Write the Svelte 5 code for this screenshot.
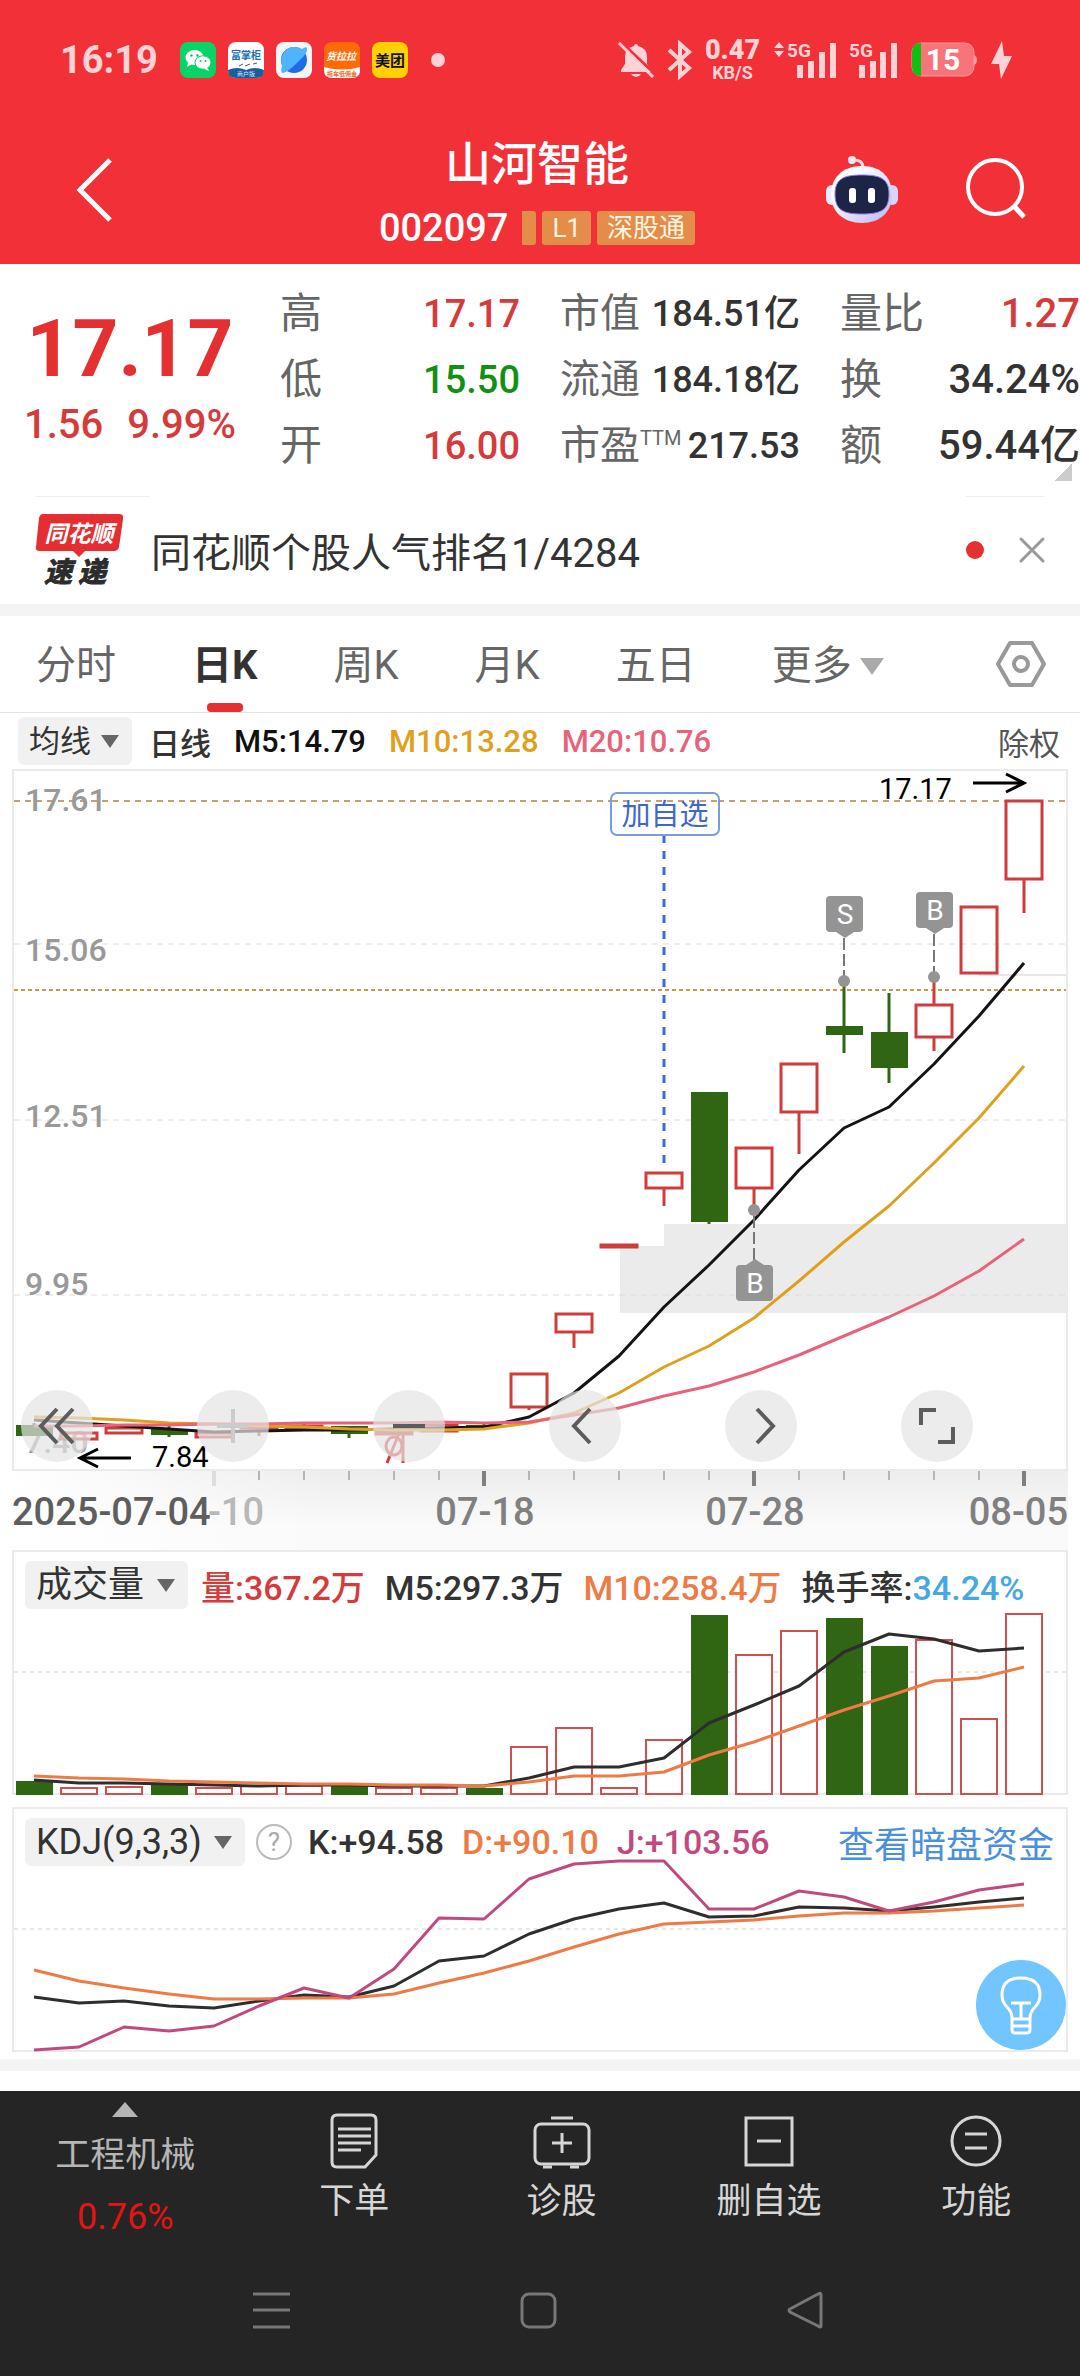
<script>
  let tab = '日K';
  const tabs = ['分时', '日K', '周K', '月K', '五日'];

  const quotes = [
    [
      { label: '高', value: '17.17', tone: 'up' },
      { label: '低', value: '15.50', tone: 'down' },
      { label: '开', value: '16.00', tone: 'up' }
    ],
    [
      { label: '市值', value: '184.51亿' },
      { label: '流通', value: '184.18亿' },
      { label: '市盈', sup: 'TTM', value: '217.53' }
    ],
    [
      { label: '量比', value: '1.27', tone: 'up' },
      { label: '换', value: '34.24%' },
      { label: '额', value: '59.44亿' }
    ]
  ];

  // [up, body top, body bottom, wick top, wick bottom]
  const candles = [
    [0, 655, 666, 653, 666],
    [1, 663, 669, 663, 669],
    [1, 658, 663, 658, 663],
    [0, 659, 665, 656, 667],
    [1, 663, 667, 663, 667],
    [1, 655, 658, 655, 666],
    [1, 656, 658, 654, 658],
    [0, 656, 664, 656, 668],
    [1, 662, 664, 662, 664],
    [1, 655, 661, 655, 661],
    [0, 655, 658, 654, 658],
    [1, 604, 637, 604, 640],
    [1, 544, 562, 544, 578],
    [1, 475, 477, 475, 477],
    [1, 403, 418, 403, 436],
    [0, 322, 452, 322, 454],
    [1, 378, 418, 378, 440],
    [1, 294, 342, 294, 384],
    [0, 256, 265, 211, 283],
    [0, 262, 298, 223, 313],
    [1, 235, 267, 207, 281],
    [1, 137, 203, 137, 203],
    [1, 31, 109, 31, 143]
  ];
  const ma5 = [650, 653, 656, 659, 662, 661, 660, 660, 659, 658, 657, 647, 623, 586, 537, 495, 450, 400, 358, 337, 294, 246, 193];
  const ma10 = [647, 648, 650, 653, 654, 656, 657, 659, 660, 660, 659, 653, 643, 623, 597, 576, 548, 511, 472, 436, 393, 348, 296];
  const ma20 = [656, 656, 655, 655, 654, 654, 653, 653, 653, 652, 653, 652, 645, 638, 626, 616, 602, 585, 566, 547, 526, 501, 469];

  const volTops = [231, 238, 237, 235, 238, 236, 236, 235, 238, 238, 238, 197, 178, 238, 190, 65, 105, 81, 68, 96, 90, 169, 64];
  const vol5 = [230, 233, 233, 234, 235, 236, 235, 235, 236, 236, 236, 228, 217, 217, 208, 173, 155, 136, 102, 84, 89, 101, 98];
  const vol10 = [226, 228, 229, 231, 232, 233, 234, 234, 235, 235, 236, 232, 226, 226, 222, 205, 192, 176, 160, 146, 131, 128, 117];

  const kLine = [190, 196, 194, 199, 201, 194, 188, 190, 179, 154, 149, 127, 112, 102, 96, 110, 109, 100, 101, 104, 100, 95, 91];
  const dLine = [163, 174, 181, 187, 192, 192, 191, 191, 187, 176, 166, 154, 140, 127, 117, 115, 113, 109, 106, 106, 104, 101, 98];
  const jLine = [243, 240, 220, 224, 219, 199, 181, 191, 162, 111, 112, 72, 57, 54, 54, 102, 102, 84, 90, 104, 95, 83, 77];

  const priceLabels = [
    ['17.61', 41],
    ['15.06', 191],
    ['12.51', 357],
    ['9.95', 525],
    ['7.40', 683]
  ];
  const ticks = [5, 6, 7, 8, 9, 11, 12, 13, 14, 15, 17, 18, 19, 20, 21];

  const x = (i) => 34 + i * 45;
  const line = (ys) => ys.map((y, i) => `${x(i)},${y}`).join(' ');
</script>

<div class="page">
  <header class="top">
    <div class="status">
      <span class="time">16:19</span>
      <div class="apps">
        <svg width="36" height="36" viewBox="0 0 36 36">
          <rect width="36" height="36" rx="8" fill="#07d466" />
          <ellipse cx="14.500" cy="15.500" rx="9" ry="7.500" fill="#fff" />
          <path d="M8 20l-1 5 5-3z" fill="#fff" />
          <ellipse cx="23" cy="20.500" rx="8" ry="6.700" fill="#fff" stroke="#07d466" />
          <path d="M27 25l2 4-5-2z" fill="#fff" />
          <g fill="#07c05c"><circle cx="11.500" cy="13.500" r="1.200" /><circle cx="17.500" cy="13.500" r="1.200" /><circle cx="20.500" cy="19" r="1" /><circle cx="25.500" cy="19" r="1" /></g>
        </svg>
        <svg width="36" height="36" viewBox="0 0 36 36">
          <rect width="36" height="36" rx="8" fill="#fff" />
          <path d="M0 28q9-4 18 0q9-4 18 0q0 8-8 8H8q-8 0-8-8z" fill="#1a5e9c" />
          <text x="18" y="17" text-anchor="middle" font-size="10" font-weight="700" fill="#1b70b0">富掌柜</text>
          <path d="M11 24l4-2m2 2l5-2m3 0l4-1" stroke="#555" fill="none" />
          <text x="18" y="34" text-anchor="middle" font-size="6" fill="#d9ecff">商户版</text>
        </svg>
        <svg width="36" height="36" viewBox="0 0 36 36">
          <rect width="36" height="36" rx="8" fill="#f5f5f7" />
          <circle cx="18" cy="18" r="13" fill="#1e6ce8" />
          <path d="M6 24C3 13 10 5 18 5q5 0 8 2 4-3 5-1 1 5-8 13Q12 30 7 31q-3 0-1-7z" fill="#4fb4fb" />
        </svg>
        <svg width="36" height="36" viewBox="0 0 36 36">
          <rect width="36" height="36" rx="8" fill="#ff6a08" />
          <path d="M0 25q18 5 36 0v3q0 8-8 8H8q-8 0-8-8z" fill="#fff" />
          <text x="17" y="18" text-anchor="middle" font-size="10" font-weight="700" font-style="italic" fill="#fff">货拉拉</text>
          <text x="18" y="34" text-anchor="middle" font-size="6" font-weight="700" fill="#f26a1b">拖车低佣金</text>
        </svg>
        <svg width="36" height="36" viewBox="0 0 36 36">
          <rect width="36" height="36" rx="8" fill="#ffd100" />
          <text x="18" y="24" text-anchor="middle" font-size="15" font-weight="700" fill="#111">美团</text>
        </svg>
      </div>
      <span class="more-dot"></span>

      <div class="sys">
        <svg width="36" height="36" viewBox="0 0 36 36" fill="currentColor">
          <path d="M18 2q2 0 2 2 9 2 9 11v7l4 6v2H3v-2l4-6v-7Q7 6 16 4q0-2 2-2zM13 32h10q-2 3-5 3t-5-3z" />
          <path d="M4 1L37 32" stroke="#f23037" stroke-width="3" />
          <path d="M1 1L35 35" stroke="currentColor" stroke-width="3" />
        </svg>
        <svg width="23" height="36" viewBox="0 0 23 36" fill="none" stroke="currentColor" stroke-width="4">
          <path d="M1 8l20 18-9 8V2l9 8L1 28" />
        </svg>
        <div class="net"><b>0.47</b><span>KB/S</span></div>
        <svg width="61" height="36" viewBox="0 0 61 36" fill="currentColor">
          <path d="M0 6l5-6 5 6zM0 9h10l-5 6z" />
          <text x="13" y="15" font-size="19" font-weight="700">5G</text>
          <path d="M23 23h6v13h-6zM34 19h6v17h-6zM45 10h6v26h-6zM56 1h6v35h-6z" />
        </svg>
        <svg width="48" height="36" viewBox="0 0 48 36" fill="currentColor">
          <text x="0" y="15" font-size="19" font-weight="700">5G</text>
          <path d="M10 23h6v13h-6zM21 19h6v17h-6zM31 10h6v26h-6zM42 1h6v35h-6z" />
        </svg>
        <svg width="66" height="36" viewBox="0 0 66 36">
          <path d="M63 13q3 1 3 5t-3 5z" fill="#f9a0a3" />
          <rect x="1" y="1" width="62" height="33" rx="9" fill="#f7757a" stroke="#f9999d" />
          <path d="M10 1Q1 1 1 10v15q0 9 9 9z" fill="#0fbf13" />
          <text x="32" y="28" text-anchor="middle" font-size="30" font-weight="700" fill="#fff">15</text>
        </svg>
        <svg width="21" height="38" viewBox="0 0 21 38" fill="currentColor"><path d="M11 0L0 23h8l2 15L21 15h-8z" /></svg>
      </div>
    </div>

    <div class="titlebar">
      <button class="plain" aria-label="返回">
        <svg width="38" height="66" viewBox="0 0 38 66" fill="none" stroke="#fff" stroke-width="5"><path d="M34 3L4 33l30 30" /></svg>
      </button>
      <div class="title">
        <h1>山河智能</h1>
        <div class="sub">
          <span class="code">002097</span>
          <span class="badge cut"></span>
          <span class="badge">L1</span>
          <span class="badge">深股通</span>
        </div>
      </div>
      <div class="actions">
        <button class="plain" aria-label="智能助手">
          <svg width="72" height="68" viewBox="0 0 72 68">
            <defs>
              <linearGradient id="shell" x1="0" y1="0" x2="1" y2="1">
                <stop offset="0.3" stop-color="#fdfcff" /><stop offset="1" stop-color="#b9b6ee" />
              </linearGradient>
            </defs>
            <path d="M26 5q11-1 11 8" fill="none" stroke="#f7d9e6" stroke-width="3" />
            <circle cx="26" cy="5" r="4" fill="#f9e6ef" />
            <rect x="0" y="30" width="12" height="20" rx="6" fill="#eeeaff" />
            <rect x="60" y="30" width="12" height="20" rx="6" fill="#d8d4fa" />
            <path d="M36 11c20 0 30 12 30 29S54 68 36 68 5 57 5 40s11-29 31-29z" fill="url(#shell)" />
            <path d="M36 20c17 0 27 3 27 19s-8 20-27 20S9 55 9 39s10-19 27-19z" fill="#1d2546" stroke="#8d7be8" />
            <rect x="23" y="33" width="7" height="15" rx="3" fill="#fff" />
            <rect x="42" y="33" width="7" height="15" rx="3" fill="#fff" />
          </svg>
        </button>
        <button class="plain" aria-label="搜索">
          <svg width="62" height="62" viewBox="0 0 62 62" fill="none" stroke="#fff" stroke-width="4">
            <circle cx="29" cy="29" r="27" /><path d="M47 47l11 12" stroke-width="5" />
          </svg>
        </button>
      </div>
    </div>
  </header>

  <section class="quote">
    <div class="price">
      <strong>17.17</strong>
      <div><span>1.56</span><span>9.99%</span></div>
    </div>
    {#each quotes as col, c}
      <dl class:first={c === 0} class:mid={c === 1}>
        {#each col as q}
          <div class="q">
            <dt>{q.label}{#if q.sup}<sup>{q.sup}</sup>{/if}</dt>
            <dd class={q.tone}>{q.value}</dd>
          </div>
        {/each}
      </dl>
    {/each}
    <span class="corner"></span>
  </section>

  <section class="news">
    <svg width="90" height="72" viewBox="0 0 90 72">
      <path d="M8 0h76q5 0 4 5l-4 28q-1 4-5 4H50l-6 6-6-6H5q-5 0-4-4L4 4q1-4 4-4z" fill="#e42e31" />
      <text x="44" y="28" text-anchor="middle" font-size="23" font-weight="700" font-style="italic" fill="#fff">同花顺</text>
      <g font-size="28" font-weight="700" font-style="italic" fill="#2c2c2c" stroke="#2c2c2c">
        <text x="9" y="68">速</text><text x="43" y="68">递</text>
      </g>
    </svg>
    <a href="#rank">同花顺个股人气排名1/4284</a>
    <span class="red-dot"></span>
    <button class="plain" aria-label="关闭">
      <svg width="26" height="26" viewBox="0 0 26 26" stroke="#999" stroke-width="3" stroke-linecap="round"><path d="M2 2l22 22M24 2L2 24" /></svg>
    </button>
  </section>

  <nav class="tabs">
    {#each tabs as t}
      <button class:active={tab === t} on:click={() => (tab = t)}>{t}</button>
    {/each}
    <button class="more">更多<svg width="24" height="18" viewBox="0 0 24 18"><path d="M0 1h24L12 18z" fill="#aaa" /></svg></button>
    <button class="settings" aria-label="设置">
      <svg width="50" height="48" viewBox="0 0 50 48" fill="none" stroke="#999" stroke-width="4" stroke-linejoin="round">
        <path d="M14 3h22l12 21-12 21H14L2 24z" /><circle cx="25" cy="24" r="7" />
      </svg>
    </button>
  </nav>

  <div class="ma">
    <div class="chip">
      <select aria-label="均线"><option>均线</option></select>
      <svg width="18" height="13" viewBox="0 0 18 13"><path d="M0 0h18L9 13z" fill="#666" /></svg>
    </div>
    <span>日线</span>
    <span class="black">M5:14.79</span>
    <span class="gold">M10:13.28</span>
    <span class="pink">M20:10.76</span>
    <button class="plain adjust">除权</button>
  </div>

  <section class="panel kchart">
    <svg class="plot" viewBox="14 1 1052 698">
      <g fill="#ebebeb">
        <rect x="620" y="476" width="44" height="67" />
        <rect x="664" y="454" width="402" height="89" />
      </g>
      <path d="M979 205h87" stroke="#ece3ea" stroke-width="2" />
      <g stroke="#dcdcdc" stroke-width="1" stroke-dasharray="6 5">
        <path d="M14 174h1052M14 350h1052M14 525h1052" />
      </g>
      <path d="M14 31h1052" stroke="#c2a070" stroke-width="2" stroke-dasharray="6 5" />
      <path d="M14 220h1052" stroke="#c99a4c" stroke-width="2" stroke-dasharray="4 3" />
      {#each priceLabels as [label, y]}
        <text x="25" {y} class="axis">{label}</text>
      {/each}

      {#each candles as [up, top, bottom, high, low], i}
        {#if up}
          <rect x={x(i) - 18} y={top} width="36" height={bottom - top} class="rise" />
          <path d="M{x(i)} {high}V{top}M{x(i)} {bottom}V{low}" class="rise" />
        {:else}
          <rect x={x(i) - 18} y={top} width="37" height={bottom - top} class="fall" />
          <path d="M{x(i)} {high}V{low}" class="fall-wick" />
        {/if}
      {/each}
      <g fill="none" stroke="#d03a3a" stroke-width="3">
        <ellipse cx="394" cy="676" rx="8" ry="9" /><path d="M403 660v33M402 656l-15 37" />
      </g>

      <g fill="none" stroke-width="3" stroke-linejoin="round">
        <polyline points={line(ma5)} stroke="#141414" />
        <polyline points={line(ma10)} stroke="#dfa020" />
        <polyline points={line(ma20)} stroke="#e8637a" />
      </g>

      <!-- watchlist date -->
      <path d="M664 65v329" stroke="#4169cf" stroke-width="3" stroke-dasharray="8 8" />
      <rect x="611" y="23" width="108" height="42" rx="6" fill="#fff" stroke="#7a9be0" stroke-width="2" />
      <path d="M612 31h106" stroke="#c2a070" stroke-width="2" stroke-dasharray="6 5" />
      <text x="665" y="55" text-anchor="middle" font-size="29" fill="#3f68cc">加自选</text>

      <!-- trade marks -->
      <g class="mark">
        <path d="M844 168v40M934 164v40M754 446v44" />
        <circle cx="844" cy="211" r="6" /><circle cx="934" cy="207" r="6" /><circle cx="754" cy="440" r="6" />
        <rect x="826" y="126" width="37" height="36" rx="4" /><path class="tip" d="M836 162h18l-9 6z" />
        <rect x="916" y="122" width="37" height="36" rx="4" /><path class="tip" d="M926 158h18l-9 6z" />
        <rect x="736" y="495" width="37" height="36" rx="4" /><path class="tip" d="M746 495h18l-9-6z" />
        <text x="845" y="154">S</text><text x="935" y="150">B</text><text x="755" y="523">B</text>
      </g>

      <g font-size="29">
        <text x="879" y="29">17.17</text><text x="152" y="697">7.84</text>
      </g>
      <path d="M973 13h50M1006 4l18 9-18 9M131 688H81M98 679l-18 9 18 9" fill="none" stroke="#000" stroke-width="3" />
    </svg>

    <div class="tools">
      <button aria-label="最早"><svg width="36" height="36" viewBox="0 0 36 36"><path d="M18 1L2 18l16 17M34 1L18 18l16 17" /></svg></button>
      <button class="off" aria-label="放大"><svg width="36" height="36" viewBox="0 0 36 36"><path d="M18 1v34M2 18h32" /></svg></button>
      <button aria-label="缩小"><svg width="36" height="36" viewBox="0 0 36 36"><path d="M2 18h32" /></svg></button>
      <button aria-label="左移"><svg width="36" height="36" viewBox="0 0 36 36"><path d="M23 1L7 18l16 17" /></svg></button>
      <button aria-label="右移"><svg width="36" height="36" viewBox="0 0 36 36"><path d="M14 1l16 17-16 17" /></svg></button>
      <button aria-label="全屏"><svg width="36" height="36" viewBox="0 0 36 36"><path d="M2 17V2h15M34 19v15H19" /></svg></button>
    </div>
  </section>

  <div class="dates">
    <svg class="plot" viewBox="12 0 1056 79">
      {#each ticks as i}
        <path d="M{x(i)} 0v9" stroke="#b5b5b5" stroke-width="2" />
      {/each}
      <path d="M{x(4)} 0v15" stroke="#ddd" stroke-width="4" />
      <path d="M{x(10)} 0v15M{x(16)} 0v15M{x(22)} 0v15" stroke="#808080" stroke-width="4" />
      <g class="date">
        <text x="12" y="54" fill="#5e5e5e">2025-07-04</text>
        <text x="264" y="54" text-anchor="end" fill="#b8b8b8">-10</text>
        <text x="485" y="54" text-anchor="middle" fill="#808080">07-18</text>
        <text x="755" y="54" text-anchor="middle" fill="#808080">07-28</text>
        <text x="1068" y="54" text-anchor="end" fill="#808080">08-05</text>
      </g>
    </svg>
  </div>

  <section class="panel">
    <div class="legend">
      <div class="chip">
        <select aria-label="指标一"><option>成交量</option></select>
        <svg width="18" height="13" viewBox="0 0 18 13"><path d="M0 0h18L9 13z" fill="#666" /></svg>
      </div>
      <span class="red">量:367.2万</span>
      <span>M5:297.3万</span>
      <span class="orange">M10:258.4万</span>
      <span>换手率:<span class="blue">34.24%</span></span>
    </div>
    <svg class="plot" viewBox="14 59 1052 184">
      <path d="M14 122h1052" stroke="#e6e6e6" stroke-width="2" stroke-dasharray="4 4" />
      {#each volTops as top, i}
        {#if candles[i][0]}
          <rect x={x(i) - 18} y={top} width="36" height={244 - top} class="vol" />
        {:else}
          <rect x={x(i) - 18} y={top} width="37" height={245 - top} class="fall" />
        {/if}
      {/each}
      <g fill="none" stroke-width="3" stroke-linejoin="round">
        <polyline points={line(vol5)} stroke="#2e2e2e" />
        <polyline points={line(vol10)} stroke="#ee7a45" />
      </g>
    </svg>
  </section>

  <section class="panel kdj">
    <div class="legend">
      <div class="chip">
        <select aria-label="指标二"><option>KDJ(9,3,3)</option></select>
        <svg width="18" height="13" viewBox="0 0 18 13"><path d="M0 0h18L9 13z" fill="#666" /></svg>
      </div>
      <button class="help" aria-label="指标说明">?</button>
      <span>K:+94.58</span>
      <span class="orange">D:+90.10</span>
      <span class="magenta">J:+103.56</span>
      <a href="#fund">查看暗盘资金</a>
    </div>
    <svg class="plot" viewBox="14 59 1052 184">
      <path d="M14 122h1052" stroke="#e6e6e6" stroke-width="2" stroke-dasharray="4 4" />
      <g fill="none" stroke-width="3" stroke-linejoin="round">
        <polyline points={line(kLine)} stroke="#2e2e2e" />
        <polyline points={line(dLine)} stroke="#ee7a45" />
        <polyline points={line(jLine)} stroke="#c04a80" />
      </g>
    </svg>
    <button class="bulb" aria-label="提示">
      <svg width="42" height="58" viewBox="0 0 42 58" fill="none" stroke="#fff" stroke-width="3">
        <path d="M12 42q0-6-5-11-5-5-5-12Q2 2 21 2t19 17q0 7-5 12-5 5-5 11v12q0 3-3 3H15q-3 0-3-3zM12 43h18M12 50h18M11 27h20M21 27v15" />
      </svg>
    </button>
  </section>

  <footer>
    <div class="tabbar">
      <a href="#sector" class="sector">
        <svg width="26" height="15" viewBox="0 0 26 15"><path d="M13 0l13 15H0z" fill="#b5b5b5" /></svg>
        <span>工程机械</span>
        <b>0.76%</b>
      </a>
      <a href="#order">
        <svg width="56" height="56" viewBox="0 0 56 56">
          <path d="M11 2h34q5 0 5 5v35L39 54H11q-5 0-5-5V7q0-5 5-5z" /><path d="M12 16h33M12 23h33M12 30h33M12 37h23" />
        </svg>
        <span>下单</span>
      </a>
      <a href="#diagnose">
        <svg width="56" height="56" viewBox="0 0 56 56">
          <rect x="1" y="11" width="54" height="40" rx="6" /><path d="M17 5h22M28 20v20M18 30h20M9 54h9M36 54h9" />
        </svg>
        <span>诊股</span>
      </a>
      <a href="#remove">
        <svg width="56" height="56" viewBox="0 0 56 56"><path d="M5 5h46v47H5zM16 28h24" /></svg>
        <span>删自选</span>
      </a>
      <a href="#features">
        <svg width="56" height="56" viewBox="0 0 56 56"><circle cx="28" cy="28" r="24" /><path d="M17 21h22M17 35h22" /></svg>
        <span>功能</span>
      </a>
    </div>
    <div class="sysnav">
      <button class="plain" aria-label="最近任务"><svg width="37" height="37" viewBox="0 0 37 37"><path d="M0 2h37M0 18h37M0 35h37" /></svg></button>
      <button class="plain" aria-label="主屏幕"><svg width="37" height="37" viewBox="0 0 37 37"><rect x="2" y="2" width="33" height="33" rx="7" /></svg></button>
      <button class="plain" aria-label="后退"><svg width="37" height="37" viewBox="0 0 37 37"><path d="M34 3v31q0 2-3 0L3 20q-2-2 0-3L31 2q3-2 3 1z" /></svg></button>
    </div>
  </footer>
</div>

<style>
  .page {
    background: #fff;
    color: #333;
    font-family: Roboto, "Noto Sans CJK SC", sans-serif;
    overflow: hidden;
  }
  button,
  select {
    font: inherit;
    color: inherit;
    background: none;
    border: none;
    padding: 0;
    margin: 0;
  }
  a {
    color: inherit;
    text-decoration: none;
  }
  svg {
    display: block;
    flex: none;
    overflow: visible;
  }
  .plain {
    display: block;
    cursor: pointer;
  }

  .top {
    background: #f23037;
    color: #fff;
    padding-top: 30px;
  }
  .status {
    display: flex;
    align-items: center;
    height: 60px;
    padding: 0 68px 0 60px;
    color: #ffd3d5;
  }
  .time {
    font-size: 38px;
    font-weight: 700;
    margin-right: 22px;
  }
  .apps {
    display: flex;
    gap: 12px;
  }
  .more-dot {
    width: 14px;
    height: 14px;
    border-radius: 50%;
    background: currentColor;
    margin-left: 23px;
  }
  .sys {
    display: flex;
    align-items: center;
    gap: 14px;
    margin-left: auto;
  }
  .net {
    display: flex;
    flex-direction: column;
    align-items: center;
    width: 55px;
    line-height: 20px;
    font-size: 18px;
    font-weight: 700;
  }
  .net b {
    font-size: 27px;
    line-height: 26px;
  }
  .titlebar {
    display: grid;
    grid-template-columns: 1fr auto 1fr;
    padding: 44px 52px 19px 46px;
  }
  .titlebar > .plain {
    justify-self: start;
    margin: 23px 0 0 30px;
    height: 66px;
  }
  .title {
    text-align: center;
  }
  h1 {
    margin: 0;
    font-size: 46px;
    line-height: 60px;
    font-weight: 500;
  }
  .sub {
    display: flex;
    align-items: center;
    gap: 6px;
    height: 34px;
    margin-top: 17px;
  }
  .code {
    font-size: 38px;
    font-weight: 500;
    margin-right: 8px;
  }
  .badge {
    background: #e48c4a;
    color: #fff4e2;
    font-size: 26px;
    line-height: 34px;
    padding: 0 10px;
    border-radius: 3px;
  }
  .cut {
    height: 34px;
    width: 14px;
    padding: 0;
    border-radius: 0 3px 3px 0;
  }
  .actions {
    display: flex;
    justify-content: flex-end;
    align-items: center;
    gap: 68px;
    height: 68px;
    margin-top: 21px;
  }

  .quote {
    position: relative;
    display: grid;
    grid-template-columns: 222fr 240fr 240fr 240fr;
    column-gap: 40px;
    padding: 17px 0 17px 18px;
  }
  .price {
    padding: 27px 0 0 2px;
    text-align: center;
    color: #e43030;
    font-weight: 500;
  }
  .price strong {
    display: block;
    font-size: 80px;
    line-height: 82px;
    font-weight: 700;
  }
  .price div {
    display: flex;
    justify-content: center;
    gap: 24px;
    font-size: 40px;
    line-height: 70px;
    color: #d63a3a;
  }
  dl {
    margin: 0;
    font-size: 40px;
  }
  .q {
    display: flex;
    justify-content: space-between;
    line-height: 66px;
    white-space: nowrap;
  }
  dt {
    color: #666;
    font-size: 42px;
  }
  dd {
    margin: 0;
    font-weight: 500;
  }
  .first dd {
    font-size: 38px;
  }
  .mid dt {
    font-size: 40px;
  }
  .mid dd {
    font-size: 36px;
  }
  sup {
    font-size: 20px;
    line-height: 20px;
    vertical-align: 14px;
  }
  .up {
    color: #d63a3a;
  }
  .down {
    color: #119011;
  }
  .corner {
    position: absolute;
    right: 8px;
    bottom: 15px;
    width: 18px;
    height: 18px;
    background: linear-gradient(135deg, transparent 50%, #ccc 50%);
  }

  .news {
    display: flex;
    align-items: center;
    height: 108px;
    padding: 0 35px;
    border-bottom: 12px solid #f4f4f4;
    font-size: 40px;
    background: linear-gradient(#eee, #eee) 36px 0 / 114px 1px no-repeat, linear-gradient(#eee, #eee) calc(100% - 36px) 0 / 78px 1px no-repeat;
  }
  .news a {
    flex: 1;
    margin-left: 26px;
  }
  .red-dot {
    width: 18px;
    height: 18px;
    border-radius: 50%;
    background: #e43030;
    margin-right: 35px;
  }

  .tabs {
    display: flex;
    align-items: center;
    gap: 76px;
    height: 96px;
    padding: 0 34px 0 36px;
    border-bottom: 1px solid #e4e4e4;
    font-size: 40px;
    color: #666;
  }
  .tabs button {
    position: relative;
    padding-top: 4px;
    line-height: 92px;
    cursor: pointer;
  }
  .tabs .active {
    color: #333;
    font-weight: 700;
  }
  .active::after {
    content: "";
    position: absolute;
    left: 50%;
    bottom: 0;
    width: 36px;
    height: 9px;
    margin-left: -18px;
    border-radius: 4px;
    background: #e43030;
  }
  .more {
    display: flex;
    align-items: center;
    gap: 8px;
  }
  .tabs .settings {
    margin-left: auto;
    padding-top: 0;
  }

  .ma {
    display: flex;
    align-items: center;
    gap: 23px;
    height: 56px;
    padding: 0 20px 0 18px;
    font-size: 31px;
    white-space: nowrap;
  }
  .ma span {
    font-weight: 500;
  }
  .chip {
    display: flex;
    align-items: center;
    gap: 10px;
    height: 48px;
    padding: 0 13px 0 11px;
    border-radius: 6px;
    background: #f1f1f1;
  }
  .chip select {
    appearance: none;
    cursor: pointer;
  }
  .ma .chip {
    margin-right: -6px;
  }
  .adjust {
    margin-left: auto;
    color: #555;
  }
  .ma .black {
    color: #111;
  }
  .gold {
    color: #dfa020;
  }
  .pink {
    color: #e8637a;
  }
  .red {
    color: #d63a3a;
  }
  .orange {
    color: #ee7a45;
  }
  .blue {
    color: #45a8e2;
  }
  .magenta {
    color: #c04a80;
  }

  .panel {
    position: relative;
    margin: 0 12px;
    border: 2px solid #ebebeb;
  }
  .plot {
    width: 100%;
    height: auto;
  }
  .axis {
    font-size: 32px;
    font-weight: 500;
    fill: #999;
  }
  .rise {
    fill: none;
    stroke: #cf3c3c;
    stroke-width: 3;
  }
  .vol {
    fill: #fff;
    stroke: #cf5050;
    stroke-width: 2;
  }
  .fall {
    fill: #306514;
  }
  .fall-wick {
    stroke: #306514;
    stroke-width: 3;
  }
  .mark {
    fill: #949494;
  }
  .mark path {
    stroke: #777;
    stroke-width: 2;
    stroke-dasharray: 12 4;
  }
  .mark .tip {
    stroke: none;
  }
  .mark text {
    fill: #fff;
    font-size: 28px;
    text-anchor: middle;
  }
  .tools {
    position: absolute;
    left: 0;
    right: 0;
    bottom: 7px;
    display: flex;
    justify-content: space-between;
    padding: 0 93px 0 7px;
  }
  .tools button {
    display: flex;
    align-items: center;
    justify-content: center;
    width: 72px;
    height: 72px;
    border-radius: 50%;
    background: rgba(228, 228, 228, 0.7);
    cursor: pointer;
  }
  .tools path {
    fill: none;
    stroke: #5c5c5c;
    stroke-width: 4;
  }
  .tools .off path {
    stroke: #ccc;
  }
  .dates {
    margin: 0 12px;
    background: linear-gradient(90deg, #fff, rgba(255, 255, 255, 0) 30%), linear-gradient(#ededed, #fafafa 70%);
  }
  .date {
    font-size: 38px;
    font-weight: 500;
  }

  .legend {
    display: flex;
    align-items: center;
    gap: 20px;
    height: 48px;
    padding: 9px 12px 0 11px;
    font-size: 34px;
    white-space: nowrap;
  }
  .legend span {
    font-weight: 500;
  }
  .legend .chip {
    gap: 12px;
    margin-right: -7px;
    font-size: 36px;
  }
  .kdj {
    margin-top: 12px;
    margin-bottom: 7px;
  }
  .kdj .legend {
    gap: 18px;
  }
  .kdj .legend a {
    margin-left: auto;
    font-size: 36px;
    color: #4a90dc;
  }
  .legend .help {
    width: 36px;
    height: 36px;
    border: 2px solid #bbb;
    border-radius: 50%;
    font-size: 26px;
    line-height: 32px;
    color: #aaa;
    margin-right: -2px;
  }
  .bulb {
    position: absolute;
    right: 0;
    bottom: 0;
    display: flex;
    align-items: center;
    justify-content: center;
    width: 90px;
    height: 90px;
    border-radius: 50%;
    background: #72c5ff;
    cursor: pointer;
  }

  footer {
    border-top: 12px solid #f4f4f4;
    color: #d6d6d6;
  }
  .tabbar {
    display: grid;
    grid-template-columns: 250fr 207fr 207fr 207fr 207fr;
    height: 160px;
    margin-top: 20px;
    background: #252525;
    font-size: 35px;
  }
  .tabbar a {
    display: flex;
    flex-direction: column;
    align-items: center;
    padding-top: 22px;
    line-height: 50px;
  }
  .tabbar a span {
    margin-top: 8px;
  }
  .tabbar a:not(.sector) path,
  .tabbar rect,
  .tabbar circle {
    fill: none;
    stroke: #d6d6d6;
    stroke-width: 3;
  }
  .tabbar .sector {
    padding-top: 11px;
    color: #b5b5b5;
  }
  .tabbar .sector span {
    margin-top: 14px;
  }
  .sector b {
    margin-top: 11px;
    font-weight: 400;
    font-size: 36px;
    color: #e31414;
  }
  .sysnav {
    display: flex;
    justify-content: center;
    align-items: center;
    gap: 230px;
    height: 118px;
    padding: 0 4px 7px 0;
    background: #252525;
  }
  .sysnav path,
  .sysnav rect {
    fill: none;
    stroke: #777;
    stroke-width: 3;
  }
</style>
